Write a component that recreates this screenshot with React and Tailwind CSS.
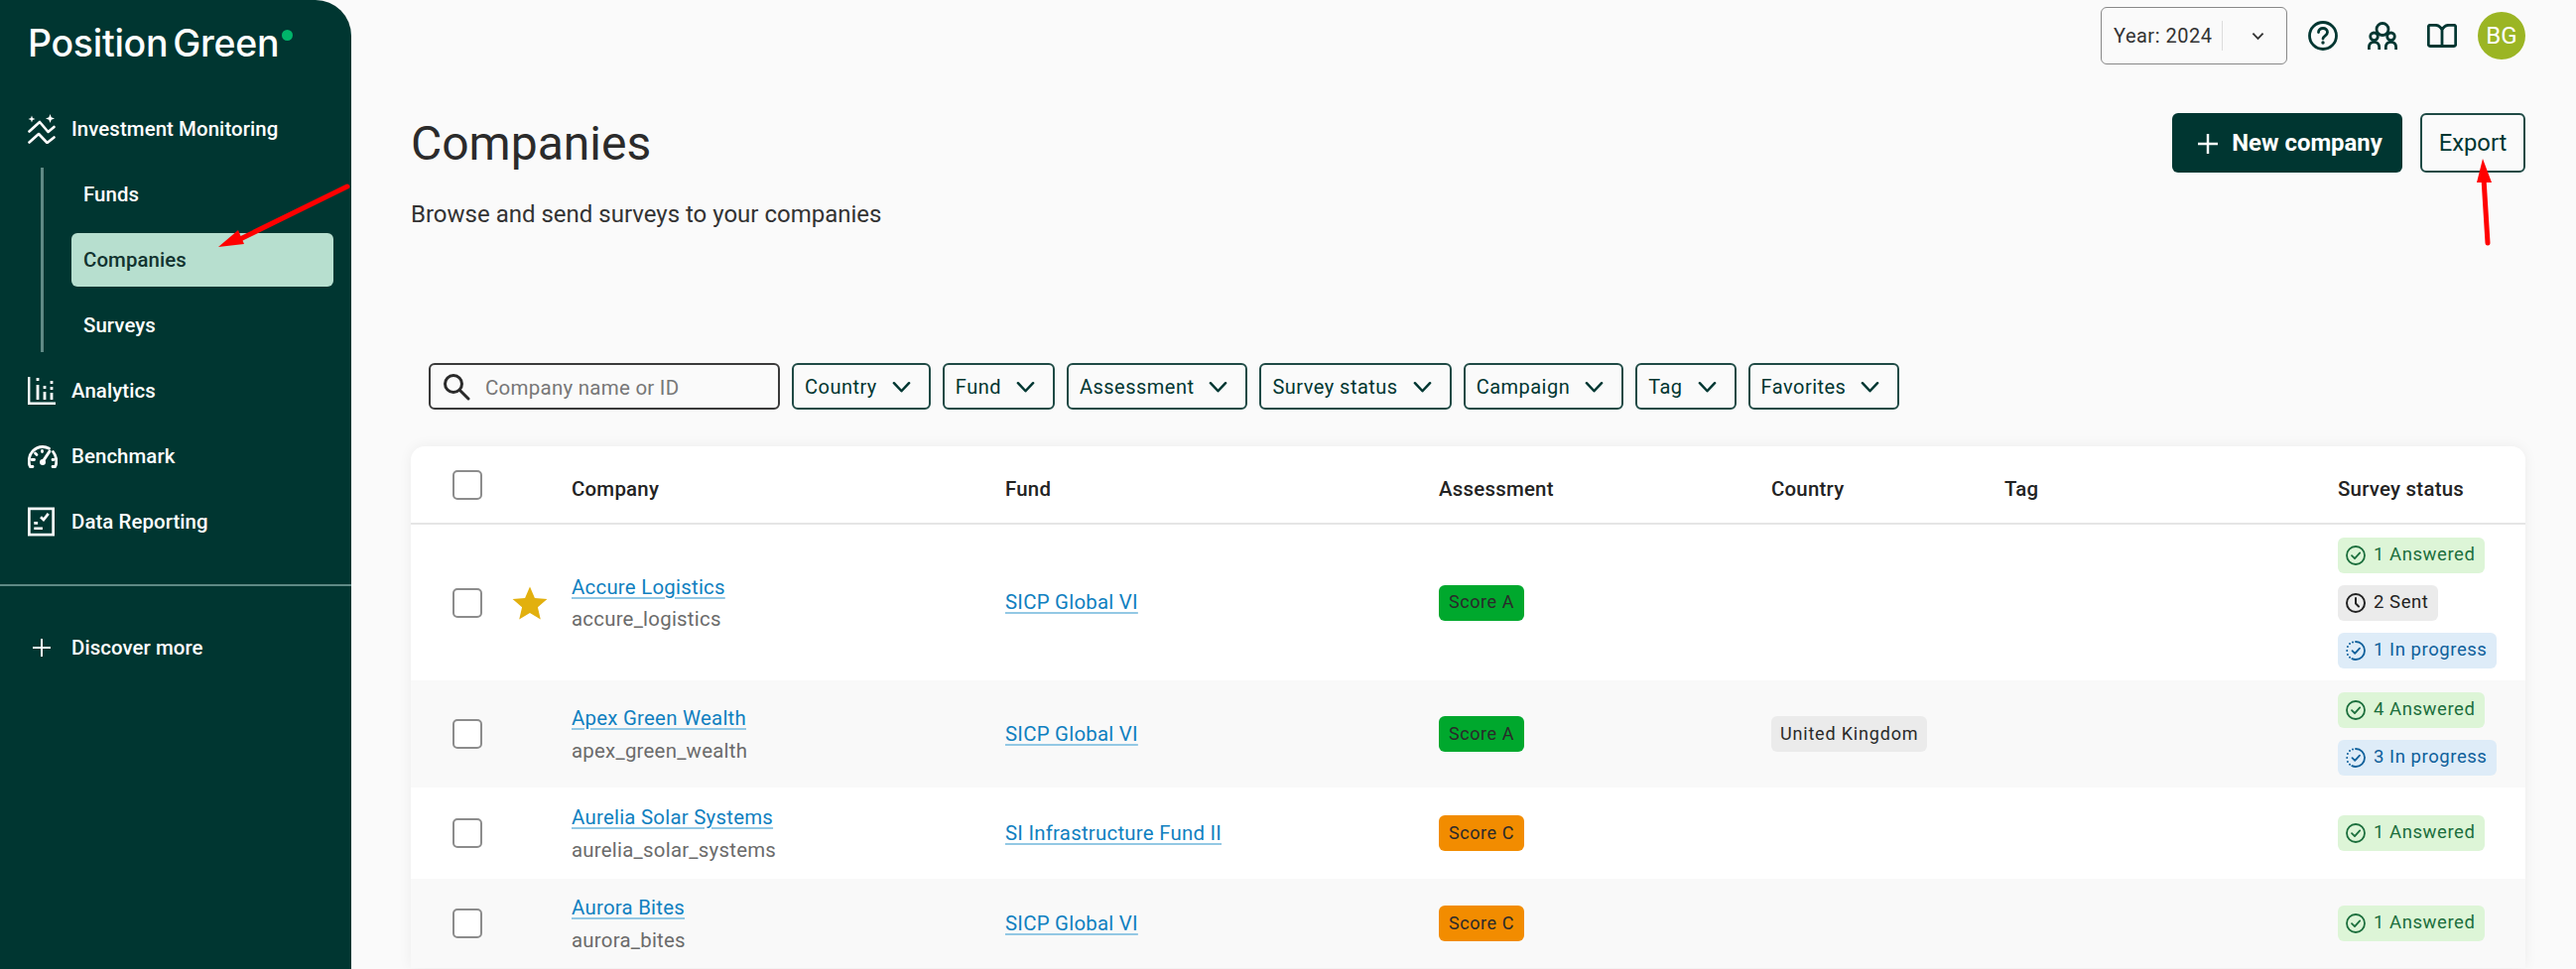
import React from "react";

const Chev = ({ className = "" }) => (
  <svg viewBox="0 0 20 12" className={`w-[19px] h-[12px] shrink-0 ${className}`} fill="none" stroke="#003631" strokeWidth="2.6" strokeLinecap="round" strokeLinejoin="round">
    <path d="M2 2l8 8.5L18 2" />
  </svg>
);

const IconInvest = () => (
  <svg viewBox="0 0 28 30" className="w-[28px] h-[30px]" fill="none" stroke="#fff" strokeWidth="2.600" strokeLinecap="round" strokeLinejoin="round">
    <path d="M1.500 17.500 12 8l8.500 10 6-5" />
    <path d="M1.500 28.500 11 20l8.500 9 7-5.500" />
    <path d="M4 1.500l.9 2.600 2.600.9-2.600.9L4 8.500l-.9-2.600L.5 5l2.600-.9z" fill="#fff" stroke="none" />
    <path d="M22.500 0l1.200 3.300 3.300 1.200-3.300 1.200-1.200 3.300-1.200-3.300L18 4.500l3.300-1.200z" fill="#fff" stroke="none" />
  </svg>
);
const IconAnalytics = () => (
  <svg viewBox="0 0 28 28" className="w-[28px] h-[28px]" fill="none" stroke="#fff" strokeWidth="2.400">
    <path d="M1.200 0v26.800H28" />
    <path d="M10 1v3M10 8v15M17 9v3M17 15v8M24 4v3M24 10v3M24 16v7" strokeWidth="2.800" />
  </svg>
);
const IconBench = () => (
  <svg viewBox="0 0 30 23" className="w-[30px] h-[23px]" fill="none" stroke="#fff" strokeWidth="2.800" strokeLinecap="round">
    <path d="M5 21.500H2.500C1.500 20 1.200 18 1.200 16 1.200 8 7 1.500 15 1.500c2.500 0 4.500.6 6.500 1.700M25.500 6.500c2 2.500 3.300 6 3.300 9.500 0 2-.3 4-1.300 5.500H25" />
    <path d="M16 15l6-9" strokeWidth="3" />
    <circle cx="15" cy="17" r="3" fill="#fff" stroke="none" />
    <path d="M4 14.500h2.500M25 14.500h1M7.500 8l1.500 1.500M14.500 5.500v1" />
  </svg>
);
const IconData = () => (
  <svg viewBox="0 0 28 30" className="w-[27px] h-[30px]" fill="none" stroke="#fff" strokeWidth="2.800">
    <rect x="1.400" y="1.400" width="25.200" height="27.200" />
    <path d="M13.500 10l3 3 5-6.500" />
    <path d="M6.500 16.500h4M6.500 22h9" />
  </svg>
);
const IconPlus = ({ size = 18, w = 2 }) => (
  <svg viewBox="0 0 18 18" style={{ width: size, height: size }} fill="none" stroke="#fff" strokeWidth={w}>
    <path d="M9 0v18M0 9h18" />
  </svg>
);

const IconHelp = () => (
  <svg viewBox="0 0 30 30" className="w-[30px] h-[30px]" fill="none" stroke="#003631" strokeWidth="2.800" strokeLinecap="round">
    <circle cx="15" cy="15" r="13.500" />
    <path d="M10.500 11.500c0-2.500 2-4 4.500-4s4.500 1.700 4.500 4c0 3.500-4.500 3.500-4.500 6.500" />
    <circle cx="15" cy="22" r="1.700" fill="#003631" stroke="none" />
  </svg>
);
const IconGroup = () => (
  <svg viewBox="0 0 30 28" className="w-[30px] h-[28px]" fill="none" stroke="#003631" strokeWidth="2.800">
    <circle cx="15" cy="7.500" r="6" />
    <circle cx="6.500" cy="14.800" r="3.800" />
    <circle cx="23.500" cy="14.800" r="3.800" />
    <path d="M1.400 28v-2.500c0-3 2-5.200 5.100-5.200s5.200 2.200 5.200 5.200V28M18.300 28v-2.500c0-3 2-5.200 5.200-5.200s5.100 2.200 5.100 5.200V28" />
  </svg>
);
const IconBook = () => (
  <svg viewBox="0 0 30 24" className="w-[30px] h-[24px]" fill="none" stroke="#003631" strokeWidth="2.800" strokeLinejoin="round">
    <path d="M15 6v16.500H3a1.700 1.700 0 0 1-1.700-1.700V3A1.700 1.700 0 0 1 3 1.300h5c3 0 5.500 1.700 7 4.700zm0 0c1.500-3 4-4.700 7-4.700h5A1.700 1.700 0 0 1 28.700 3v17.800a1.700 1.700 0 0 1-1.700 1.700H15" />
  </svg>
);

const IconCheckCircle = ({ c }) => (
  <svg viewBox="0 0 20 20" className="w-[20px] h-[20px] shrink-0" fill="none" stroke={c} strokeWidth="1.800" strokeLinecap="round" strokeLinejoin="round">
    <circle cx="10" cy="10" r="9" />
    <path d="M6 10.200l3 3 5.200-5.800" />
  </svg>
);
const IconClock = ({ c }) => (
  <svg viewBox="0 0 20 20" className="w-[20px] h-[20px] shrink-0" fill="none" stroke={c} strokeWidth="2" strokeLinecap="round" strokeLinejoin="round">
    <circle cx="10" cy="10" r="9" />
    <path d="M10 5v5.500l3 3" />
  </svg>
);
const IconProgress = ({ c }) => (
  <svg viewBox="0 0 20 20" className="w-[20px] h-[20px] shrink-0" fill="none" stroke={c} strokeWidth="1.800" strokeLinecap="round" strokeLinejoin="round">
    <path d="M10 1a9 9 0 0 1 0 18c-1.500 0-2.600-.3-3.700-.9" />
    <path d="M1.200 10h.01M1.900 6h.01M4 3h.01M7 1.500h.01M1.900 14h.01M4 16.800h.01" strokeWidth="2" />
    <path d="M6.500 10.200l2.700 2.700 4.800-5.300" />
  </svg>
);

const statusStyles = {
  answered: { cls: "bg-[#ddf5d7] text-[#1b6e3c]", c: "#1b6e3c", I: IconCheckCircle, label: "Answered" },
  sent: { cls: "bg-[#ebebeb] text-[#222222]", c: "#222222", I: IconClock, label: "Sent" },
  progress: { cls: "bg-[#deecf8] text-[#0f609b]", c: "#0f609b", I: IconProgress, label: "In progress" },
};

const Status = ({ kind, n }) => {
  const s = statusStyles[kind];
  const I = s.I;
  return (
    <span className={`inline-flex items-center h-[36px] pl-[8px] pr-[10px] gap-[8px] rounded-[6px] text-[18.500px] tracking-[0.03em] self-start ${s.cls}`}>
      <I c={s.c} />
      <span className="whitespace-nowrap">{n} {s.label}</span>
    </span>
  );
};

const Box = () => <span className="block w-[30px] h-[30px] rounded-[5px] border-2 border-[#8c8c8c] bg-white" />;

const Star = () => (
  <svg viewBox="0 0 24 24" className="w-[38px] h-[38px]" fill="#e2b00e">
    <path d="M12 1.500l3.100 7.300 7.900.7-6 5.200 1.800 7.700L12 18.300l-6.800 4.100L7 14.700l-6-5.200 7.900-.7z" />
  </svg>
);

const Link = ({ children }) => (
  <a className="text-[20.400px] tracking-[0.012em] text-[#1080c0] underline decoration-[#93c8e4] decoration-2 underline-offset-[3px] whitespace-nowrap">{children}</a>
);

const Score = ({ grade }) => (
  <span className={`inline-flex items-center justify-center h-[36px] w-[86px] pb-[2px] rounded-[6px] text-[#2a2a2a] text-[18px] tracking-[0.03em] ${grade === "A" ? "bg-[#00a82d]" : "bg-[#f28c00]"}`}>Score {grade}</span>
);

const rows = [
  { name: "Accure Logistics", id: "accure_logistics", fund: "SICP Global VI", score: "A", star: true, h: "h-[157px]", bg: "bg-white", st: [["answered", 1], ["sent", 2], ["progress", 1]] },
  { name: "Apex Green Wealth", id: "apex_green_wealth", fund: "SICP Global VI", score: "A", country: "United Kingdom", h: "h-[108px]", bg: "bg-[#f9f9f9]", st: [["answered", 4], ["progress", 3]] },
  { name: "Aurelia Solar Systems", id: "aurelia_solar_systems", fund: "SI Infrastructure Fund II", score: "C", h: "h-[92px]", bg: "bg-white", st: [["answered", 1]] },
  { name: "Aurora Bites", id: "aurora_bites", fund: "SICP Global VI", score: "C", h: "h-[90px]", bg: "bg-[#f9f9f9]", st: [["answered", 1]] },
];

const gridCols = "grid grid-cols-[61px_59px_437px_437px_335px_235px_336px_1fr] pl-[42px] items-center";

const filters = ["Country", "Fund", "Assessment", "Survey status", "Campaign", "Tag", "Favorites"];

const NavItem = ({ icon, label, className = "" }) => (
  <div className={`flex items-center h-[54px] pl-[28px] mb-[12px] ${className}`}>
    <span className="w-[44px] flex items-center justify-start">{icon}</span>
    <span className="text-[20.400px] font-medium text-white tracking-[0.004em] whitespace-nowrap">{label}</span>
  </div>
);

const SubItem = ({ label, active }) => (
  <div className={`flex items-center h-[54px] w-[264px] pl-[12px] rounded-[6px] text-[20.400px] font-medium tracking-[0.004em] ${active ? "bg-[#b7dfcf] text-[#12332f]" : "text-white"}`}>{label}</div>
);

export default function App() {
  return (
    <div className="relative flex h-[977px] w-full overflow-hidden bg-[#fafafa] [font-family:Roboto,sans-serif]">
      <aside className="w-[354px] shrink-0 bg-[#003631] rounded-tr-[36px] flex flex-col">
        <div className="h-[103px] pl-[28px] pt-[22px] flex items-start">
          <span className="[font-family:Inter,sans-serif] text-[37.500px] leading-[44px] font-medium text-white tracking-[-0.008em] [word-spacing:-0.12em] whitespace-nowrap">Position Green</span>
          <span className="w-[11px] h-[11px] rounded-full bg-[#00b56a] ml-[3px] mt-[8px]" />
        </div>
        <NavItem icon={<IconInvest />} label="Investment Monitoring" />
        <div className="ml-[41px] border-l-[3px] border-[#5f8a85] pl-[28px] flex flex-col gap-[12px] h-[186px] justify-center mb-[12px]">
          <SubItem label="Funds" />
          <SubItem label="Companies" active />
          <SubItem label="Surveys" />
        </div>
        <NavItem icon={<IconAnalytics />} label="Analytics" />
        <NavItem icon={<IconBench />} label="Benchmark" />
        <NavItem icon={<IconData />} label="Data Reporting" className="!mb-0" />
        <div className="mt-[36px] border-t-2 border-[#5f8a85]" />
        <div className="mt-[35px]">
          <NavItem icon={<span className="pl-[5px]"><IconPlus /></span>} label="Discover more" />
        </div>
      </aside>

      <main className="flex-1 min-w-0 pl-[60px] pr-[51px] flex flex-col">
        <div className="h-[72px] flex items-center justify-end">
          <div className="flex items-center w-[188px] h-[58px] border border-[#888888] rounded-[6px] pl-[12px] text-[20px] text-[#333333] tracking-[0.025em]">
            <span className="w-[109px] whitespace-nowrap">Year: 2024</span>
            <span className="w-px h-[30px] bg-[#dddddd]" />
            <svg viewBox="0 0 14 9" className="w-[13px] h-[9px] ml-[29px]" fill="none" stroke="#333333" strokeWidth="2"><path d="M1.500 1.500 7 7l5.500-5.500" /></svg>
          </div>
          <span className="ml-[21px]"><IconHelp /></span>
          <span className="ml-[30px]"><IconGroup /></span>
          <span className="ml-[30px]"><IconBook /></span>
          <span className="ml-[21px] w-[48px] h-[48px] rounded-full bg-[#9bb524] text-white text-[24px] flex items-center justify-center">BG</span>
        </div>

        <div className="mt-[42px] flex justify-between items-start h-[252px]">
          <div>
            <h1 className="text-[48px] leading-[60px] mt-[1px] text-[#2b2b2b]">Companies</h1>
            <p className="mt-[25px] text-[24px] leading-[32px] text-[#333333]">Browse and send surveys to your companies</p>
          </div>
          <div className="flex gap-[18px]">
            <button className="h-[60px] w-[232px] bg-[#003631] rounded-[6px] flex items-center justify-center gap-[14px] pl-[6px] pt-[1px] text-white text-[23.900px] font-bold">
              <IconPlus size={20} w={2.200} />
              <span>New company</span>
            </button>
            <button className="h-[60px] w-[106px] pt-[1px] border-2 border-[#1f4a45] rounded-[6px] text-[#003631] text-[23.800px]">Export</button>
          </div>
        </div>

        <div className="ml-[18px] flex gap-[12px] h-[47px]">
          <div className="w-[354px] border-2 border-[#3a3a3a] rounded-[6px] flex items-center pl-[12px] gap-[15px]">
            <svg viewBox="0 0 28 28" className="w-[28px] h-[28px] shrink-0" fill="none" stroke="#2a2a2a" strokeWidth="3" strokeLinecap="round"><circle cx="11" cy="11" r="8.500" /><path d="M17.500 17.500 26 26" /></svg>
            <span className="mt-[3px] text-[20.500px] text-[#777777] tracking-[0.012em] whitespace-nowrap">Company name or ID</span>
          </div>
          {filters.map((f) => (
            <div key={f} className="border-2 border-[#1f4a45] rounded-[6px] flex items-center pl-[11px] pr-[18px] gap-[15px] text-[20px] tracking-[0.024em] text-[#003631] whitespace-nowrap">
              <span>{f}</span>
              <Chev />
            </div>
          ))}
        </div>

        <div className="mt-[37px] bg-white rounded-t-[14px] shadow-[0_0_14px_rgba(0,0,0,0.06)] shrink-0">
          <div className={`${gridCols} h-[79px] text-[20.400px] font-medium text-[#232323] tracking-[0.012em] border-b-2 border-[#e5e5e5]`}>
            <span><Box /></span>
            <span />
            <span className="mt-[9px]">Company</span>
            <span className="mt-[9px]">Fund</span>
            <span className="mt-[9px]">Assessment</span>
            <span className="mt-[9px]">Country</span>
            <span className="mt-[9px]">Tag</span>
            <span className="mt-[9px] whitespace-nowrap">Survey status</span>
          </div>
          {rows.map((r) => (
            <div key={r.name} className={`${gridCols} ${r.h} ${r.bg}`}>
              <span><Box /></span>
              <span className="-ml-[2px]">{r.star && <Star />}</span>
              <div className="flex flex-col gap-[5px] items-start -mt-[2px]">
                <Link>{r.name}</Link>
                <span className="text-[20.400px] leading-[24px] tracking-[0.012em] text-[#6b6b6b] whitespace-nowrap">{r.id}</span>
              </div>
              <span><Link>{r.fund}</Link></span>
              <span><Score grade={r.score} /></span>
              <span>
                {r.country && (
                  <span className="inline-flex items-center h-[36px] px-[9px] pb-[1px] rounded-[6px] bg-[#ebebeb] text-[#2a2a2a] text-[18px] tracking-[0.045em] whitespace-nowrap">{r.country}</span>
                )}
              </span>
              <span />
              <div className="flex flex-col gap-[12px] items-start">
                {r.st.map(([k, n]) => <Status key={k} kind={k} n={n} />)}
              </div>
            </div>
          ))}
        </div>
      </main>

      <svg className="absolute inset-0 w-full h-full pointer-events-none" viewBox="0 0 2596 977" fill="none">
        <path d="M350 188 238 243" stroke="#ff0000" strokeWidth="5" strokeLinecap="round" />
        <path d="M220 249 240 232 246 246z" fill="#ff0000" />
        <path d="M2507 245 2503 180" stroke="#ff0000" strokeWidth="5" strokeLinecap="round" />
        <path d="M2502 160 2511 184 2496 184z" fill="#ff0000" />
      </svg>
    </div>
  );
}
